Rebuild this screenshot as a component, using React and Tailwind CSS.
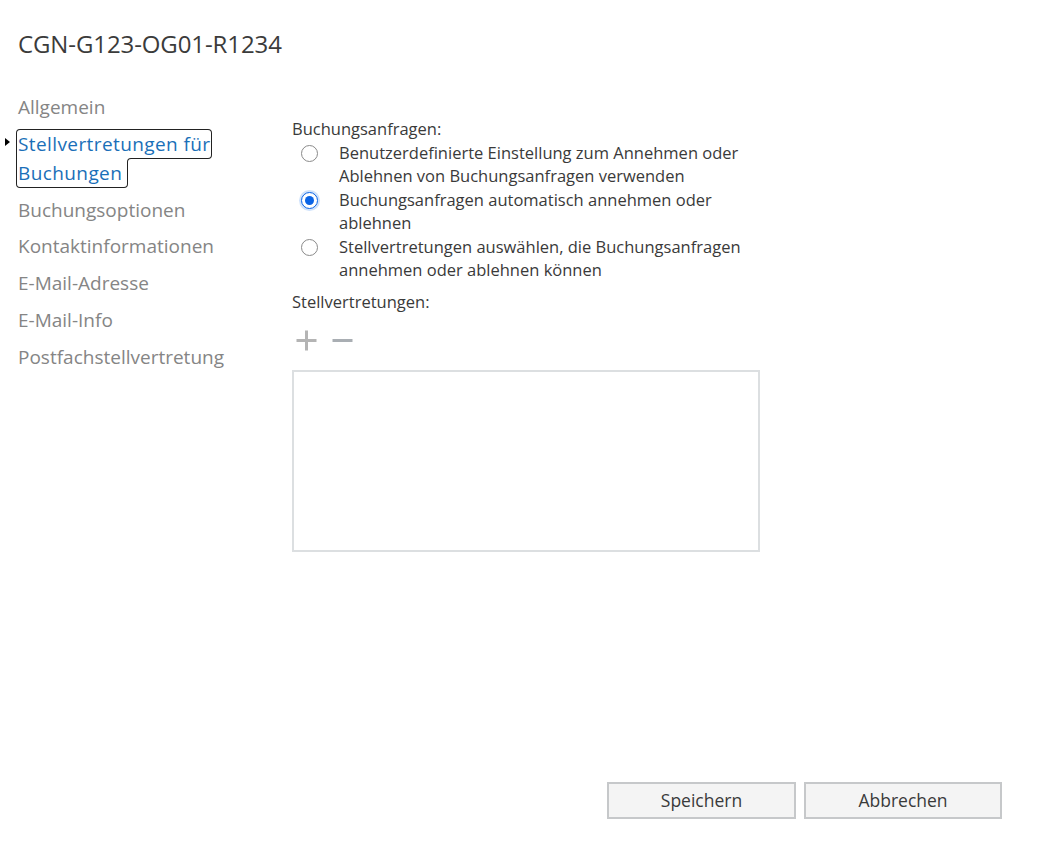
import React, { useState } from "react";

const navItems = [
  "Allgemein",
  "Stellvertretungen für Buchungen",
  "Buchungsoptionen",
  "Kontaktinformationen",
  "E-Mail-Adresse",
  "E-Mail-Info",
  "Postfachstellvertretung",
];

const options = [
  "Benutzerdefinierte Einstellung zum Annehmen oder Ablehnen von Buchungsanfragen verwenden",
  "Buchungsanfragen automatisch annehmen oder ablehnen",
  "Stellvertretungen auswählen, die Buchungsanfragen annehmen oder ablehnen können",
];

const Radio = ({ checked }) => (
  <span
    className={
      "mt-[4px] flex h-[17px] w-[17px] shrink-0 items-center justify-center rounded-full border bg-white " +
      (checked ? "border-[#0a64e6] shadow-[0_0_0_2px_#cfe2fb]" : "border-[#8a8a8a]")
    }
  >
    {checked && <span className="h-[9px] w-[9px] rounded-full bg-[#0a64e6]" />}
  </span>
);

const App = () => {
  const [selected, setSelected] = useState(1);
  const active = 1;

  return (
    <div className="flex h-[857px] w-full flex-col bg-white font-['Open_Sans',sans-serif] text-[#333]">
      <h1 className="pl-[18px] pt-[29px] text-[24px] font-normal leading-[30px] tracking-[-0.1px] text-[#3b3b3b]">
        CGN-G123-OG01-R1234
      </h1>

      <div className="mt-[30px] flex flex-1">
        <nav className="w-[292px] shrink-0 pl-[18px]">
          <ul className="flex flex-col">
            {navItems.map((item, i) =>
              i === active ? (
                <li key={item} className="relative w-[218px] py-[4px] text-[19px] leading-[29px] tracking-[0.4px] text-[#1a6fb8]">
                  <span className="absolute left-[-13px] top-[12px] h-0 w-0 border-y-[4px] border-l-[5px] border-y-transparent border-l-black" />
                  <span className="rounded-[2px] pr-[4px] outline outline-[1.5px] outline-offset-[1px] outline-[#222]">
                    {item}
                  </span>
                </li>
              ) : (
                <li key={item} className="text-[19px] leading-[36.7px] text-[#858585]">
                  {item}
                </li>
              )
            )}
          </ul>
        </nav>

        <main className="flex w-[468px] flex-col pt-[30px] text-[16.5px]">
          <p className="leading-[20px] text-[#3a3a3a]">Buchungsanfragen:</p>
          <div className="mt-[2px] flex flex-col">
            {options.map((opt, i) => (
              <label
                key={i}
                onClick={() => setSelected(i)}
                className="flex cursor-pointer gap-[21px] pl-[9px] leading-[23.4px] text-[#3a3a3a]"
              >
                <Radio checked={selected === i} />
                <span className="w-[418px]">{opt}</span>
              </label>
            ))}
          </div>

          <p className="mt-[11px] leading-[20px] text-[#3a3a3a]">Stellvertretungen:</p>
          <div className="mt-[17px] flex items-center gap-[14px] pl-[3px] text-[#b4b4b4]">
            <svg width="23" height="23" viewBox="0 0 23 23">
              <path d="M11.5 1.5v20M1.5 11.5h20" stroke="currentColor" strokeWidth="3" />
            </svg>
            <svg width="21" height="23" viewBox="0 0 21 23">
              <path d="M0.5 11.5h20" stroke="#a9aeb3" strokeWidth="3" />
            </svg>
          </div>
          <div className="mt-[18px] h-[182px] w-[468px] border-2 border-[#dcdfe1] bg-white" />
        </main>
      </div>

      <div className="flex justify-end gap-[8px] pb-[38px] pr-[36px]">
        <button className="h-[37px] w-[189px] border-2 border-[#c6c8ca] bg-[#f4f4f4] text-[17.5px] text-[#3a3a3a]">
          Speichern
        </button>
        <button className="h-[37px] w-[198px] border-2 border-[#c6c8ca] bg-[#f4f4f4] text-[17.5px] text-[#3a3a3a]">
          Abbrechen
        </button>
      </div>
    </div>
  );
};

export default App;
